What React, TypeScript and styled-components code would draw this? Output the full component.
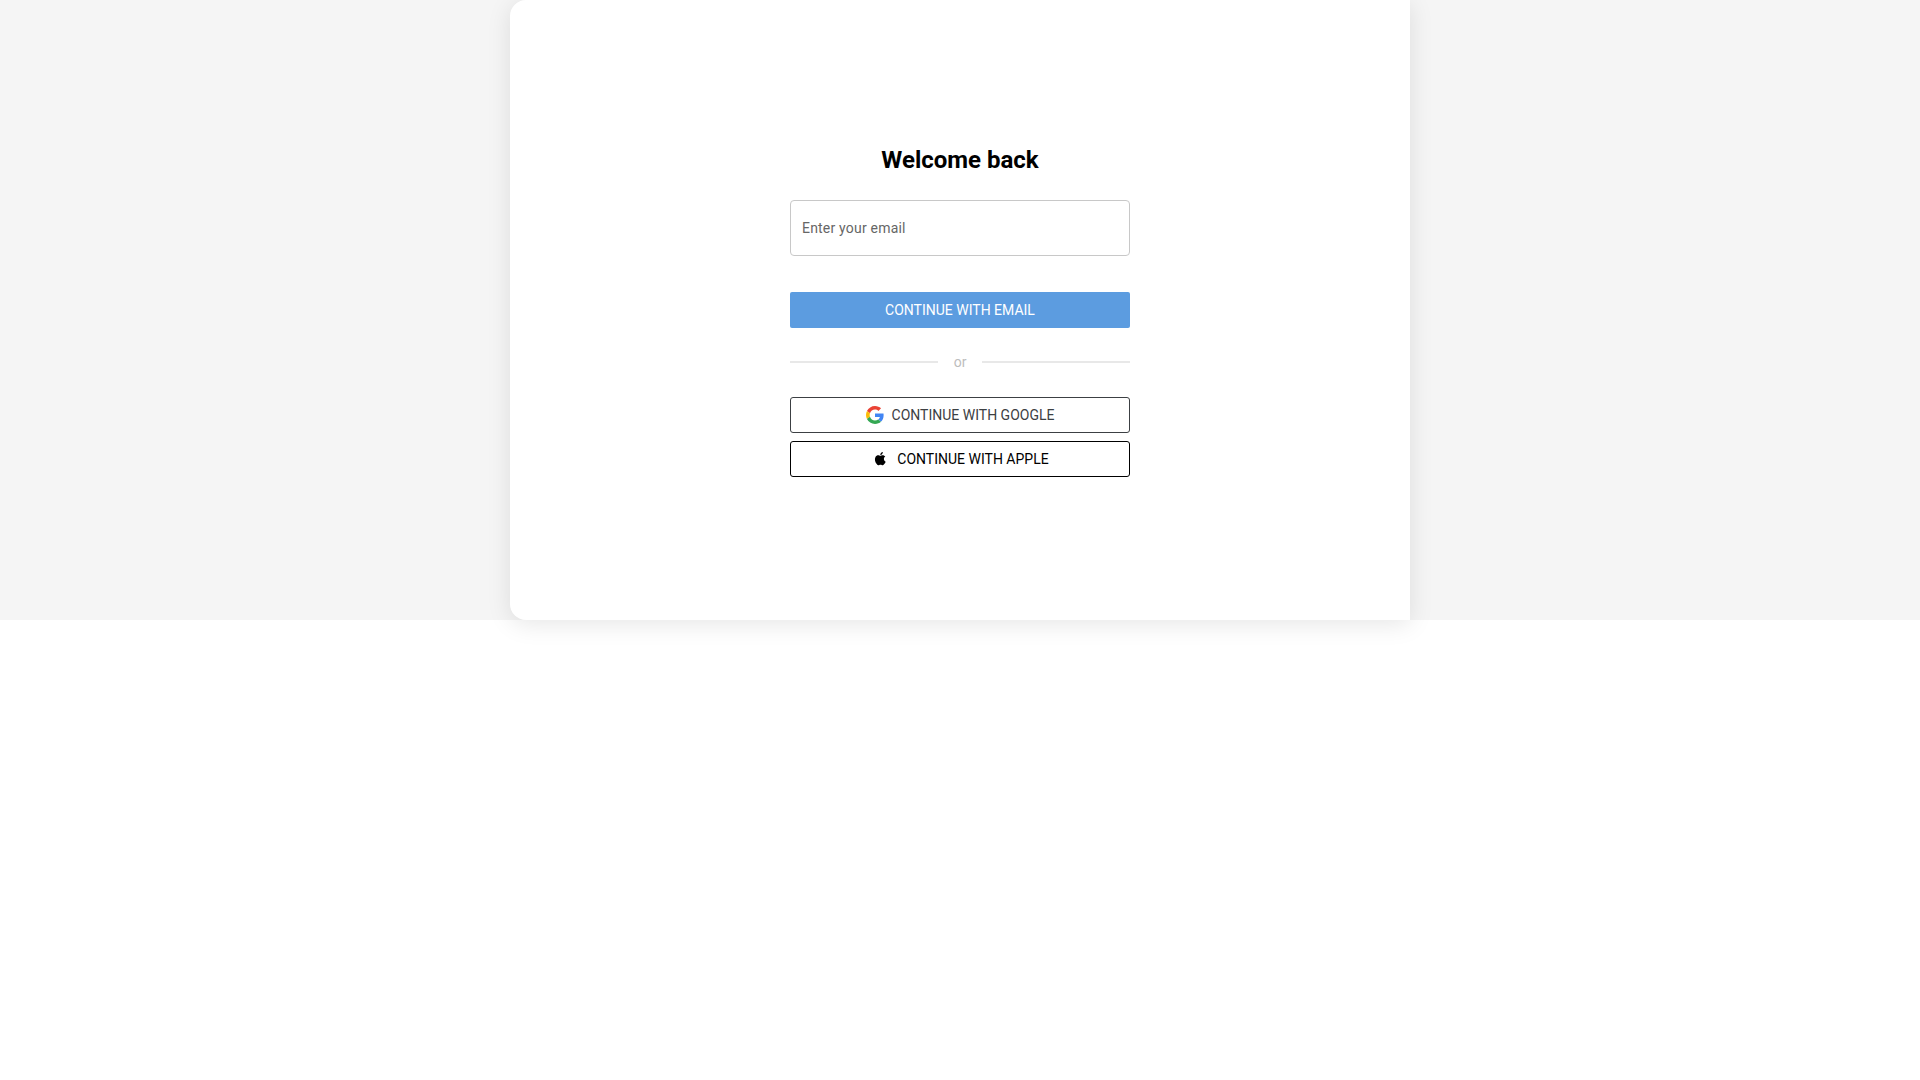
import React from "react";
import styled, { createGlobalStyle } from "styled-components";

const Global = createGlobalStyle`
  html, body, #root { margin: 0; padding: 0; height: 100%; background: #fff; }
  body { font-family: Roboto, "Liberation Sans", sans-serif; }
  * { box-sizing: border-box; }
`;

const Page = styled.div`
  height: 620px;
  background: #f5f5f5;
  display: flex;
  justify-content: center;
`;

const Panel = styled.main`
  width: 900px;
  height: 620px;
  background: #fff;
  border-radius: 16px 0 0 16px;
  box-shadow: 0 4px 24px rgba(0, 0, 0, 0.1);
  display: flex;
  flex-direction: column;
  align-items: center;
  padding-top: 145px;
`;

const Form = styled.form`
  width: 340px;
  display: flex;
  flex-direction: column;
`;

const Title = styled.h1`
  margin: 0 0 25px;
  font-size: 24px;
  line-height: 30px;
  font-weight: 700;
  color: #000;
  text-align: center;
`;

const EmailInput = styled.input`
  width: 100%;
  height: 56px;
  padding: 0 11px;
  border: 1px solid #c8c8c8;
  border-radius: 4px;
  background: #fff;
  font-family: inherit;
  font-size: 14px;
  letter-spacing: 0.2px;
  color: #333;
  outline: none;
  &::placeholder { color: #666; opacity: 1; }
`;

const PrimaryButton = styled.button`
  margin-top: 36px;
  height: 36px;
  border: 0;
  border-radius: 2px;
  background: #5c9ce0;
  color: #fff;
  font-family: inherit;
  font-size: 14px;
  font-weight: 450;
  padding: 0;
`;

const Divider = styled.div`
  margin: 24px 0 25px;
  height: 20px;
  display: flex;
  align-items: center;
  gap: 16px;
  color: #bdbdbd;
  font-size: 14px;
  &::before, &::after {
    content: "";
    flex: 1;
    height: 2px;
    background: #e8e8e8;
  }
`;

const OutlineButton = styled.button<{ $color: string }>`
  height: 36px;
  border: 1px solid ${(p) => p.$color};
  border-radius: 3px;
  background: #fff;
  color: ${(p) => p.$color};
  font-family: inherit;
  font-size: 14px;
  font-weight: 450;
  display: flex;
  align-items: center;
  justify-content: center;
  gap: 8px;
  padding: 0;
  & + & { margin-top: 8px; }
`;

const Icon = styled.svg`
  width: 18px;
  height: 18px;
  display: block;
  flex: none;
`;

const GoogleIcon = () => (
  <Icon viewBox="0 0 48 48" aria-hidden="true">
    <path fill="#EA4335" d="M24 9.5c3.54 0 6.71 1.22 9.21 3.6l6.85-6.85C35.9 2.38 30.47 0 24 0 14.62 0 6.51 5.38 2.56 13.22l7.98 6.19C12.43 13.72 17.74 9.5 24 9.5z" />
    <path fill="#4285F4" d="M46.98 24.55c0-1.57-.15-3.09-.38-4.55H24v9.02h12.94c-.58 2.96-2.26 5.48-4.78 7.18l7.73 6c4.51-4.18 7.09-10.36 7.09-17.65z" />
    <path fill="#FBBC05" d="M10.53 28.59c-.48-1.45-.76-2.99-.76-4.59s.27-3.14.76-4.59l-7.98-6.19C.92 16.46 0 20.12 0 24c0 3.88.92 7.54 2.56 10.78l7.97-6.19z" />
    <path fill="#34A853" d="M24 48c6.48 0 11.93-2.13 15.89-5.81l-7.73-6c-2.15 1.45-4.92 2.3-8.16 2.3-6.26 0-11.57-4.22-13.47-9.91l-7.98 6.19C6.51 42.62 14.62 48 24 48z" />
  </Icon>
);

const AppleIcon = () => (
  <Icon viewBox="2.7 1.8 21.7 21.7" aria-hidden="true">
    <path fill="#000" d="M18.2 12.7c0-2 1.6-3 1.7-3-1-1.400-2.400-1.600-2.900-1.600-1.200-.1-2.400.7-3 .7-.6 0-1.600-.7-2.600-.7-1.300 0-2.600.8-3.300 2-1.400 2.400-.4 6 1 8 .7 1 1.500 2 2.500 2 1 0 1.400-.6 2.600-.6 1.200 0 1.500.6 2.600.6 1.100 0 1.800-1 2.400-1.900.8-1.100 1.100-2.200 1.100-2.300 0 0-2.100-.8-2.100-3.200zM16.200 6.700c.5-.7.900-1.600.8-2.500-.8 0-1.700.5-2.300 1.200-.5.600-.9 1.500-.8 2.400.9.1 1.700-.4 2.300-1.100z" />
  </Icon>
);

export default function App() {
  return (
    <>
      <Global />
      <Page>
        <Panel>
          <Form onSubmit={(e) => e.preventDefault()}>
            <Title>Welcome back</Title>
            <EmailInput type="email" placeholder="Enter your email" />
            <PrimaryButton type="submit">CONTINUE WITH EMAIL</PrimaryButton>
            <Divider>or</Divider>
            <OutlineButton type="button" $color="#3c4043">
              <GoogleIcon />
              CONTINUE WITH GOOGLE
            </OutlineButton>
            <OutlineButton type="button" $color="#000">
              <AppleIcon />
              CONTINUE WITH APPLE
            </OutlineButton>
          </Form>
        </Panel>
      </Page>
    </>
  );
}
